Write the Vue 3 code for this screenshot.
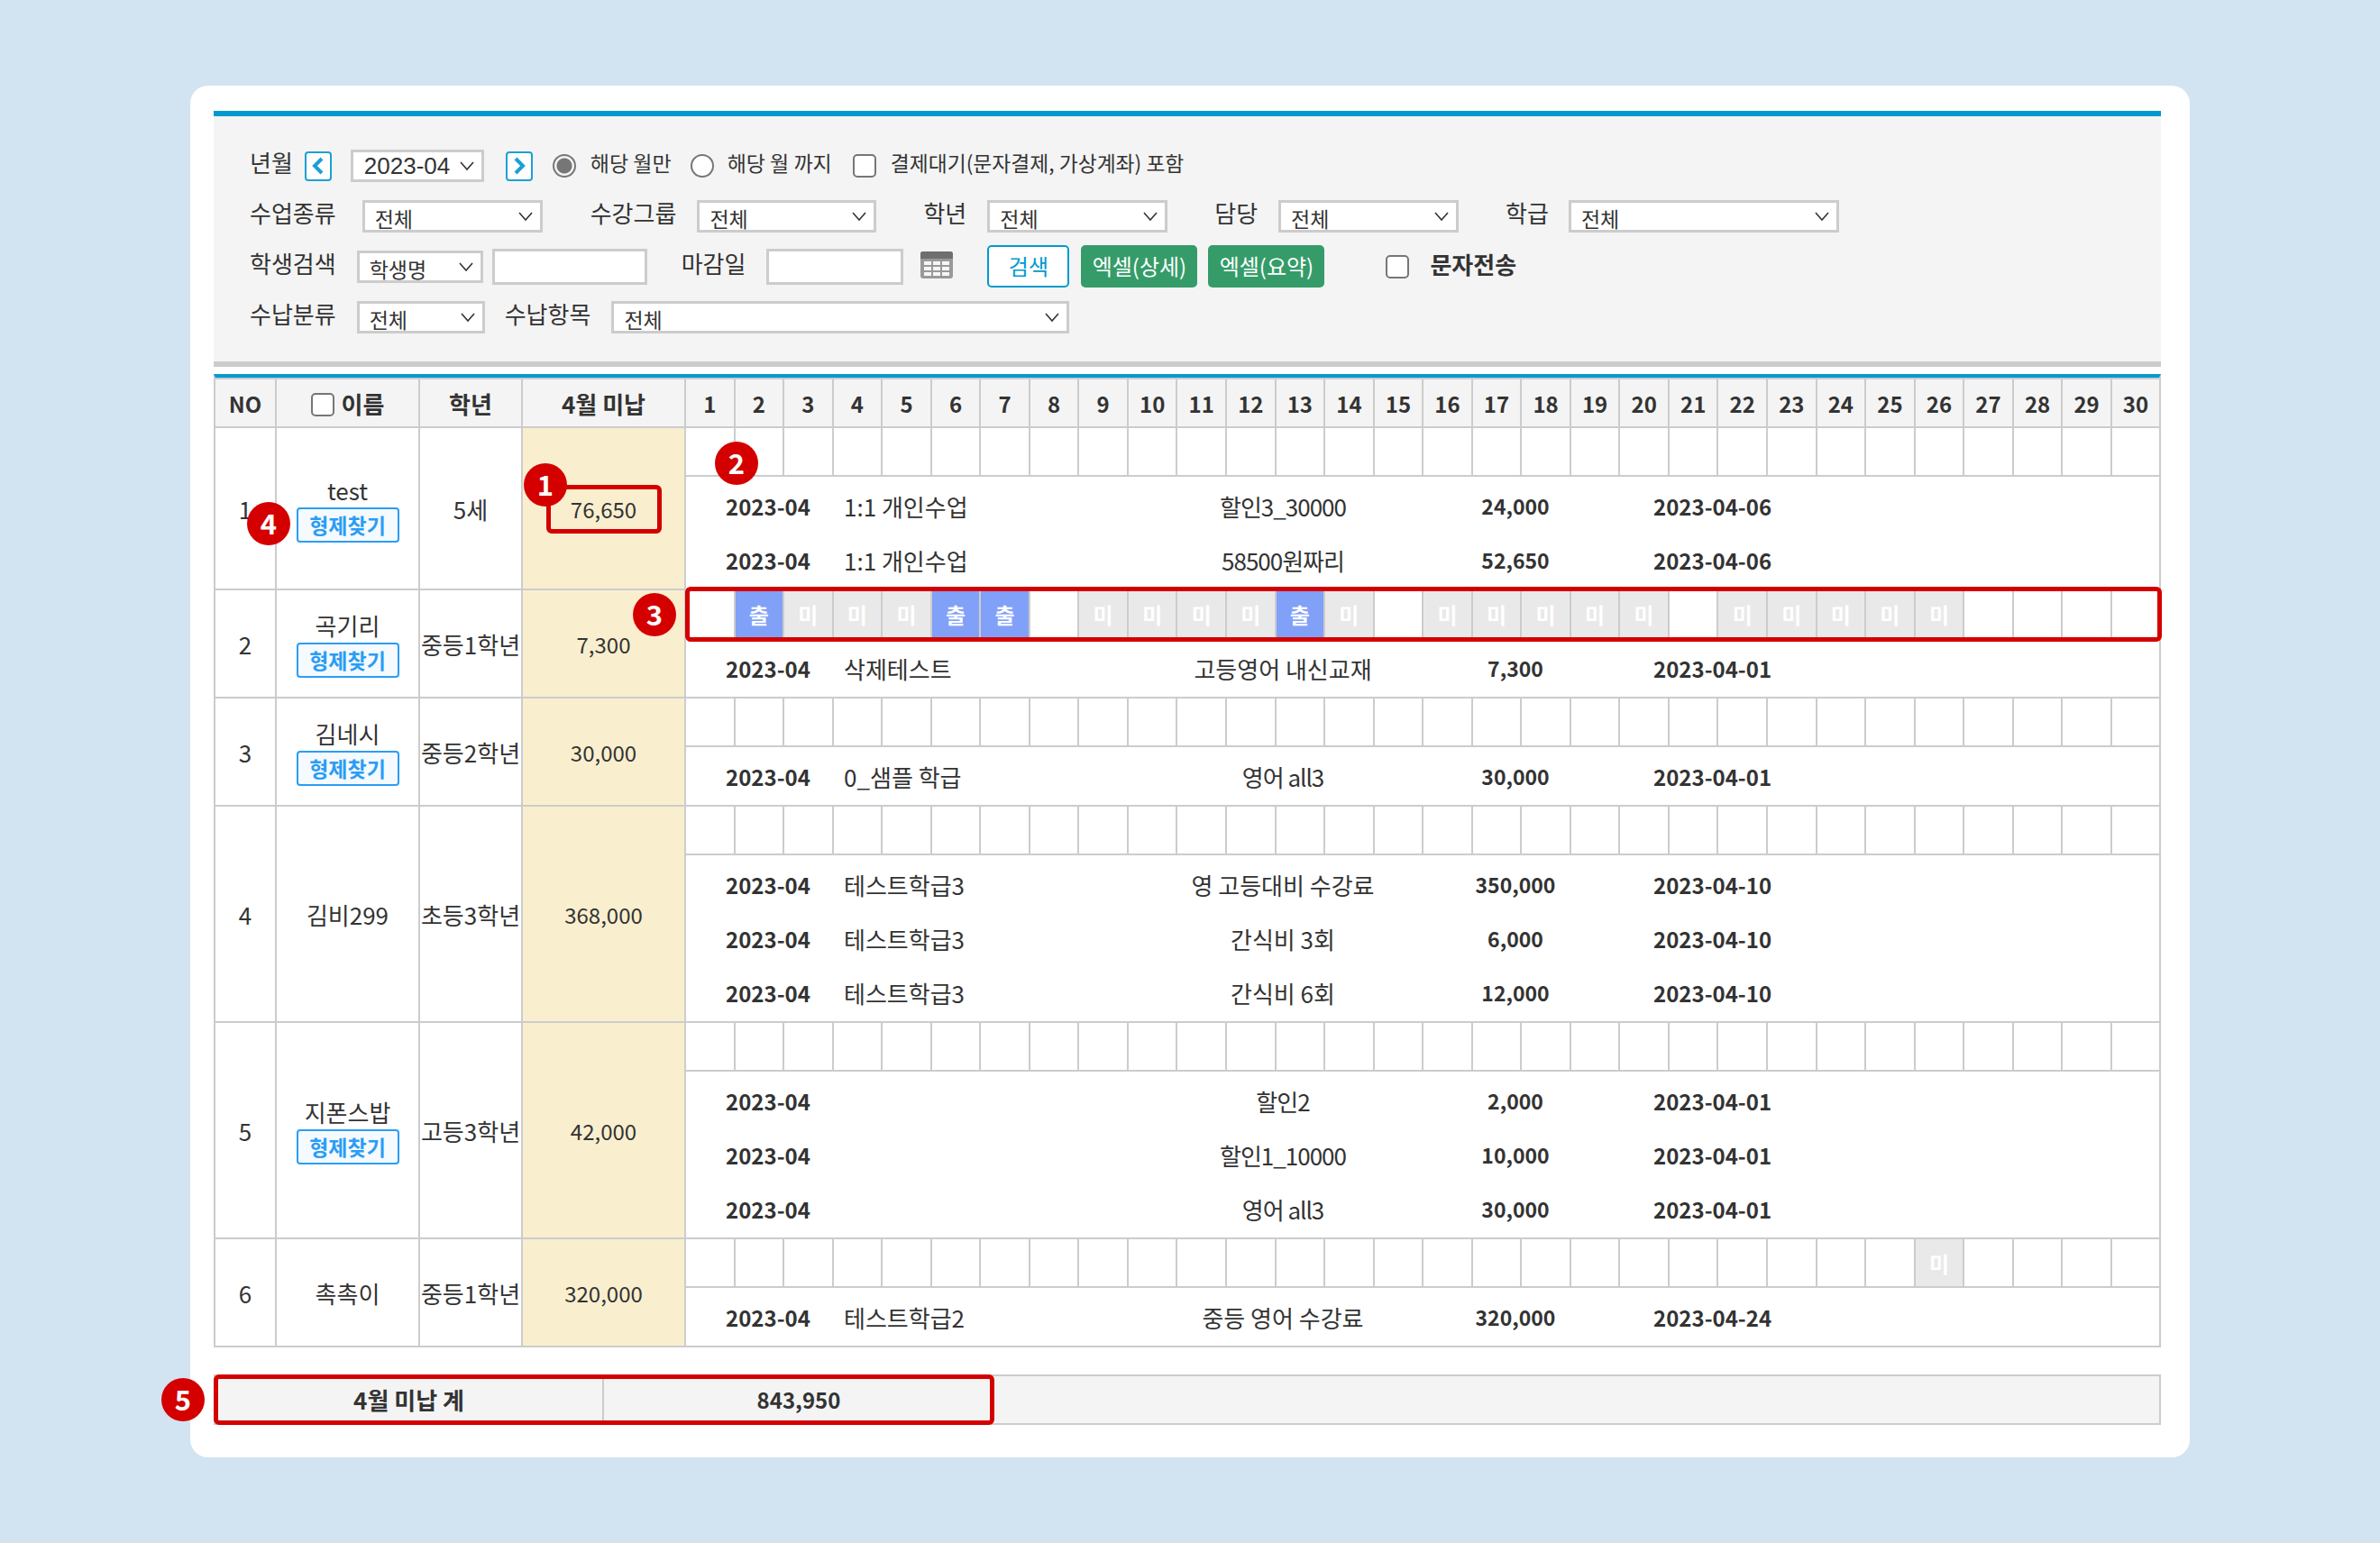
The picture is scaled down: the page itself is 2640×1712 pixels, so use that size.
<template>
  <div class="page">
    <div class="card">
      <div class="filter">
        <div class="frow">
          <span class="lbl">년월</span>
          <button class="arrow prev">
            <svg width="16" height="22" viewBox="0 0 16 22"><path d="M12 3 L4 11 L12 19" /></svg>
          </button>
          <select class="sel month"><option>2023-04</option></select>
          <button class="arrow next">
            <svg width="16" height="22" viewBox="0 0 16 22"><path d="M4 3 L12 11 L4 19" /></svg>
          </button>
          <input class="radio r1" type="radio" name="period" checked />
          <span class="opt o1">해당 월만</span>
          <input class="radio r2" type="radio" name="period" />
          <span class="opt o2">해당 월 까지</span>
          <input class="check c1" type="checkbox" />
          <span class="opt o3">결제대기(문자결제, 가상계좌) 포함</span>
        </div>
        <div class="frow">
          <span class="lbl">수업종류</span>
          <select class="sel s-kind"><option>전체</option></select>
          <span class="lbl l-group">수강그룹</span>
          <select class="sel s-group"><option>전체</option></select>
          <span class="lbl l-grade">학년</span>
          <select class="sel s-grade"><option>전체</option></select>
          <span class="lbl l-teacher">담당</span>
          <select class="sel s-teacher"><option>전체</option></select>
          <span class="lbl l-class">학급</span>
          <select class="sel s-class"><option>전체</option></select>
        </div>
        <div class="frow">
          <span class="lbl">학생검색</span>
          <select class="sel s-search"><option>학생명</option></select>
          <input class="txt t-search" type="text" />
          <span class="lbl l-due">마감일</span>
          <input class="txt t-due" type="text" />
          <svg class="cal" width="36" height="30" viewBox="0 0 36 30">
            <rect x="0" y="0" width="36" height="30" rx="3" fill="#999" />
            <path d="M0 3a3 3 0 0 1 3-3h30a3 3 0 0 1 3 3v5H0z" fill="#6f6f6f" />
            <g fill="#f6f6f6">
              <rect x="4" y="11" width="8" height="4" /><rect x="14" y="11" width="8" height="4" /><rect x="24" y="11" width="8" height="4" />
              <rect x="4" y="17" width="8" height="4" /><rect x="14" y="17" width="8" height="4" /><rect x="24" y="17" width="8" height="4" />
              <rect x="4" y="23" width="8" height="4" /><rect x="14" y="23" width="8" height="4" /><rect x="24" y="23" width="8" height="4" />
            </g>
          </svg>
          <button class="btn search">검색</button>
          <button class="btn excel e1">엑셀(상세)</button>
          <button class="btn excel e2">엑셀(요약)</button>
          <input class="check c2" type="checkbox" />
          <span class="sms">문자전송</span>
        </div>
        <div class="frow">
          <span class="lbl">수납분류</span>
          <select class="sel s-cat"><option>전체</option></select>
          <span class="lbl l-item">수납항목</span>
          <select class="sel s-item"><option>전체</option></select>
        </div>
      </div>

      <div class="table">
        <div class="row head">
          <div class="cell no">NO</div>
          <div class="cell"><input class="check c3" type="checkbox" />이름</div>
          <div class="cell">학년</div>
          <div class="cell">4월 미납</div>
          <div class="days">
            <div v-for="d in days" :key="d" class="day">{{ d }}</div>
          </div>
        </div>
        <div v-for="s in students" :key="s.no" class="row">
          <div class="cell">{{ s.no }}</div>
          <div class="cell name">
            <div class="nm">{{ s.name }}</div>
            <button v-if="s.sibling" class="sib">형제찾기</button>
          </div>
          <div class="cell">{{ s.grade }}</div>
          <div class="cell unpaid">{{ s.unpaid }}</div>
          <div class="right">
            <div class="days cal-row">
              <div
                v-for="d in days"
                :key="d"
                class="day"
                :class="{ in: s.marks[d] === '출', un: s.marks[d] === '미' }"
              >{{ s.marks[d] }}</div>
            </div>
            <div class="lines">
              <div v-for="(l, i) in s.lines" :key="i" class="line">
                <b>2023-04</b>
                <span>{{ l[0] }}</span>
                <span class="ctr" :class="{ tight: isTight(l[1]) }">{{ l[1] }}</span>
                <b class="ctr amt">{{ l[2] }}</b>
                <b class="paid">{{ l[3] }}</b>
              </div>
            </div>
          </div>
        </div>
      </div>

      <div class="total">
        <div class="t-label">4월 미납 계</div>
        <div>843,950</div>
        <div></div>
      </div>

      <!-- 안내용 표시 -->
      <div class="box box1"></div>
      <div class="box box3"></div>
      <div class="box box5"></div>
      <div class="badge b1">1</div>
      <div class="badge b2">2</div>
      <div class="badge b3">3</div>
      <div class="badge b4">4</div>
      <div class="badge b5">5</div>
    </div>
  </div>
</template>

<script setup>
const days = Array.from({ length: 30 }, (_, i) => i + 1);

const toMarks = (str) => {
  const m = {};
  str.split(",").forEach((p) => {
    const [d, v] = p.split(":");
    m[d] = v;
  });
  return m;
};

const isTight = (item) => /\d\d|all|할인/.test(item);

const students = [
  {
    no: 1, name: "test", sibling: true, grade: "5세", unpaid: "76,650", marks: {},
    lines: [
      ["1:1 개인수업", "할인3_30000", "24,000", "2023-04-06"],
      ["1:1 개인수업", "58500원짜리", "52,650", "2023-04-06"],
    ],
  },
  {
    no: 2, name: "곡기리", sibling: true, grade: "중등1학년", unpaid: "7,300",
    marks: toMarks("2:출,3:미,4:미,5:미,6:출,7:출,9:미,10:미,11:미,12:미,13:출,14:미,16:미,17:미,18:미,19:미,20:미,22:미,23:미,24:미,25:미,26:미"),
    lines: [["삭제테스트", "고등영어 내신교재", "7,300", "2023-04-01"]],
  },
  {
    no: 3, name: "김네시", sibling: true, grade: "중등2학년", unpaid: "30,000", marks: {},
    lines: [["0_샘플 학급", "영어 all3", "30,000", "2023-04-01"]],
  },
  {
    no: 4, name: "김비299", sibling: false, grade: "초등3학년", unpaid: "368,000", marks: {},
    lines: [
      ["테스트학급3", "영 고등대비 수강료", "350,000", "2023-04-10"],
      ["테스트학급3", "간식비 3회", "6,000", "2023-04-10"],
      ["테스트학급3", "간식비 6회", "12,000", "2023-04-10"],
    ],
  },
  {
    no: 5, name: "지폰스밥", sibling: true, grade: "고등3학년", unpaid: "42,000", marks: {},
    lines: [
      ["", "할인2", "2,000", "2023-04-01"],
      ["", "할인1_10000", "10,000", "2023-04-01"],
      ["", "영어 all3", "30,000", "2023-04-01"],
    ],
  },
  {
    no: 6, name: "촉촉이", sibling: false, grade: "중등1학년", unpaid: "320,000", marks: { 26: "미" },
    lines: [["테스트학급2", "중등 영어 수강료", "320,000", "2023-04-24"]],
  },
];
</script>

<style>
body {
  background: #d2e3f2;
}
</style>

<style scoped>
.page {
  height: 1712px;
  padding: 95px 0 0 211px;
  box-sizing: border-box;
  background: #d2e3f2;
  font-family: "Noto Sans CJK KR", "Noto Sans", sans-serif;
  color: #333;
}
.card {
  position: relative;
  width: 2218px;
  height: 1522px;
  box-sizing: border-box;
  padding: 28px 32px 36px 26px;
  background: #fff;
  border-radius: 20px;
}

/* 검색 영역 */
.filter {
  height: 284px;
  box-sizing: border-box;
  padding: 27px 0 0 40px;
  background: #f4f4f4;
  border-top: 6px solid #009ace;
  border-bottom: 6px solid #ccc;
}
.frow {
  display: flex;
  align-items: center;
  height: 56px;
}
.lbl {
  font-size: 26px;
  margin-bottom: 10px;
  white-space: nowrap;
}
.sel {
  height: 36px;
  box-sizing: border-box;
  padding: 0 0 0 11px;
  border: 3px solid #ccc;
  border-radius: 0;
  background: #fff url("data:image/svg+xml,%3Csvg xmlns='http://www.w3.org/2000/svg' width='16' height='10'%3E%3Cpath d='M1 1l7 8 7-8' fill='none' stroke='%23333' stroke-width='1.6'/%3E%3C/svg%3E") no-repeat right 8px center;
  appearance: none;
  font-family: inherit;
  font-size: 23px;
  color: #333;
}
.month {
  width: 148px;
  margin-left: 21px;
  padding: 0 0 0 12px;
  font-family: "Liberation Sans", sans-serif;
  font-size: 26px;
}
.arrow {
  display: flex;
  align-items: center;
  justify-content: center;
  width: 30px;
  height: 33px;
  padding: 0;
  background: #fff;
  border: 2px solid #1ca0d4;
  border-radius: 4px;
}
.arrow path {
  fill: none;
  stroke: #1ca0d4;
  stroke-width: 4;
}
.prev {
  margin-left: 13px;
}
.next {
  margin-left: 24px;
}
.radio,
.check {
  appearance: none;
  flex: none;
  width: 26px;
  height: 26px;
  margin: 0;
  box-sizing: border-box;
  border: 2px solid #767676;
  background: #fff;
}
.radio {
  border-radius: 50%;
}
.radio:checked {
  background: radial-gradient(circle, #767676 0 8px, #f4f4f4 9px);
}
.check {
  border-radius: 5px;
}
.opt {
  font-size: 23px;
  white-space: nowrap;
  margin-bottom: 8px;
}
.r1 {
  margin-left: 22px;
}
.o1 {
  margin-left: 16px;
}
.r2 {
  margin-left: 21px;
}
.o2 {
  margin-left: 15px;
}
.c1 {
  margin-left: 23px;
}
.o3 {
  margin-left: 16px;
  font-size: 22.8px;
}

.s-kind {
  width: 200px;
  margin-left: 29px;
}
.l-group {
  margin-left: 53px;
}
.s-group {
  width: 199px;
  margin-left: 23px;
}
.l-grade {
  margin-left: 52px;
}
.s-grade {
  width: 200px;
  margin-left: 23px;
}
.l-teacher {
  margin-left: 52px;
}
.s-teacher {
  width: 200px;
  margin-left: 23px;
}
.l-class {
  margin-left: 52px;
}
.s-class {
  width: 300px;
  margin-left: 22px;
}

.s-search {
  width: 140px;
  margin-left: 23px;
}
.txt {
  height: 40px;
  box-sizing: border-box;
  border: 3px solid #ccc;
  background: #fff;
}
.t-search {
  width: 172px;
  margin-left: 10px;
}
.l-due {
  margin-left: 38px;
}
.t-due {
  width: 152px;
  margin-left: 23px;
}
.cal {
  flex: none;
  margin-left: 19px;
  margin-bottom: 4px;
}
.btn {
  height: 47px;
  padding: 0 0 2px;
  margin-bottom: 1px;
  border-radius: 5px;
  font-family: inherit;
  font-size: 24px;
}
.search {
  width: 91px;
  margin-left: 38px;
  border: 2px solid #009ace;
  background: #fff;
  color: #009ace;
}
.excel {
  width: 129px;
  border: 0;
  background: #359c69;
  color: #fff;
}
.e1 {
  margin-left: 13px;
}
.e2 {
  margin-left: 12px;
}
.c2 {
  margin-left: 68px;
}
.sms {
  margin-left: 23px;
  margin-bottom: 8px;
  font-size: 26px;
  font-weight: 700;
}

.s-cat {
  width: 142px;
  margin-left: 23px;
}
.l-item {
  margin-left: 22px;
}
.s-item {
  width: 508px;
  margin-left: 23px;
}

/* 목록 */
.table {
  margin-top: 8px;
  border-top: 4px solid #009ace;
  border-left: 2px solid #ccc;
  border-right: 2px solid #ccc;
}
.row {
  display: grid;
  grid-template-columns: 68px 159px 114px 181px 1634px;
  border-bottom: 2px solid #ccc;
  font-size: 26px;
}
.cell {
  display: flex;
  align-items: center;
  justify-content: center;
  border-right: 2px solid #ccc;
  white-space: nowrap;
}
.head {
  border-top: 2px solid #ccc;
  background: #f4f4f4;
  font-weight: 700;
}
.head .cell,
.head .days {
  height: 52px;
}
.head .no,
.head .day {
  font-size: 24px;
}
.c3 {
  margin: 3px 8px 0 0;
}
.name {
  flex-direction: column;
}
.nm {
  line-height: 33px;
  padding-bottom: 3px;
}
.nm:only-child {
  padding-bottom: 0;
}
.sib {
  width: 114px;
  height: 39px;
  padding: 0;
  box-sizing: border-box;
  border: 2px solid #2a9df4;
  border-radius: 4px;
  background: #f5faff;
  color: #2a9df4;
  font-family: inherit;
  font-size: 23px;
  font-weight: 700;
}
.unpaid {
  background: #f9efcf;
  font-size: 24px;
}
.days {
  display: grid;
  grid-template-columns: repeat(29, 54.55px) 1fr;
}
.day {
  display: flex;
  align-items: center;
  justify-content: center;
  border-right: 2px solid #ccc;
}
.day:last-child {
  border-right: 0;
}
.cal-row {
  height: 52px;
  border-bottom: 2px solid #ccc;
  color: #fff;
  font-size: 24px;
  font-weight: 700;
}
.in {
  background: #81a0f8;
}
.un {
  background: #e9e9e9;
}
.lines {
  padding: 2px 0 2px 44px;
}
.line {
  display: grid;
  grid-template-columns: 131px 304px 366px 150px 1fr;
  align-items: center;
  height: 60px;
}
.line b {
  font-size: 24px;
  font-weight: 700;
}
.line .amt {
  font-size: 23px;
}
.ctr {
  text-align: center;
}
.tight {
  letter-spacing: -1px;
}
.paid {
  padding-left: 78px;
}

.total {
  display: grid;
  grid-template-columns: 431px 432px 1fr;
  height: 56px;
  box-sizing: border-box;
  margin-top: 30px;
  border: 2px solid #ccc;
  background: #f4f4f4;
  font-size: 24px;
  font-weight: 700;
  line-height: 52px;
  text-align: center;
}
.t-label {
  border-right: 2px solid #ccc;
  font-size: 26px;
}

/* 빨간 표시 */
.box {
  position: absolute;
  box-sizing: border-box;
  border: 5px solid #d40000;
  border-radius: 6px;
}
.box1 {
  left: 395px;
  top: 443px;
  width: 128px;
  height: 54px;
}
.box3 {
  left: 549px;
  top: 556px;
  width: 1638px;
  height: 61px;
}
.box5 {
  left: 26px;
  top: 1430px;
  width: 866px;
  height: 56px;
}
.badge {
  position: absolute;
  width: 48px;
  height: 48px;
  border-radius: 50%;
  background: #d40000;
  color: #fff;
  font-size: 31px;
  font-weight: 700;
  line-height: 46px;
  text-align: center;
}
.b1 {
  left: 370px;
  top: 419px;
}
.b2 {
  left: 582px;
  top: 395px;
}
.b3 {
  left: 491px;
  top: 563px;
}
.b4 {
  left: 63px;
  top: 462px;
}
.b5 {
  left: -32px;
  top: 1434px;
}
</style>
